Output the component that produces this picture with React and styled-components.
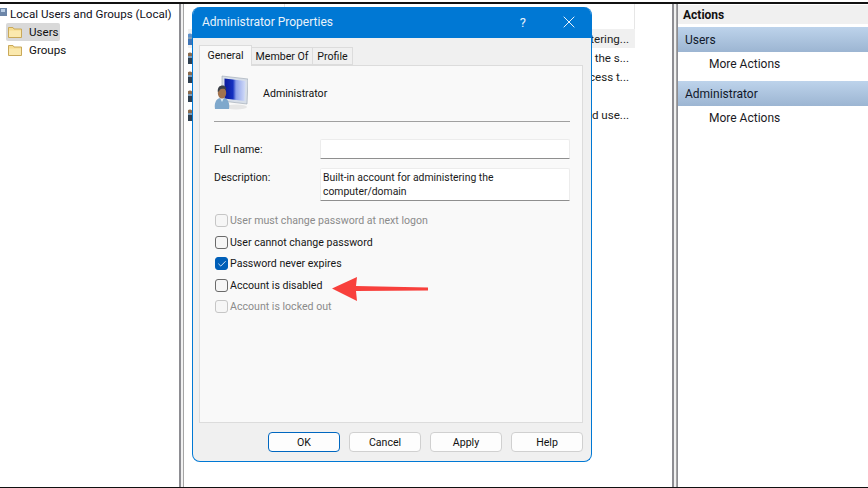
import React from 'react';
import styled, { createGlobalStyle } from 'styled-components';
import { Check } from 'lucide-react';

const GlobalStyle = createGlobalStyle`
  html, body { margin: 0; padding: 0; background: #fff; overflow: hidden; }
  * { box-sizing: border-box; }
  body { font-family: Roboto, "Open Sans", sans-serif; font-size: 12px; color: #111; }
`;

const Screen = styled.div`
  position: relative;
  width: 868px;
  height: 488px;
  padding-top: 2px;
  background: #fff;
  overflow: hidden;
`;

const Frame = styled.div`
  display: grid;
  grid-template-columns: 179px 1fr 191px;
  height: 485px;
  border-top: 2px solid #111;
`;

const BottomLine = styled.div`
  height: 1px;
  background: #111;
`;

const TreePane = styled.div`
  padding-top: 0;
  font-size: 11.6px;
`;

const TreeRoot = styled.div`
  display: flex;
  align-items: center;
  height: 19px;
  padding-left: 10px;
  white-space: nowrap;
  color: #10101a;
`;

const TreeRow = styled.div`
  display: flex;
  align-items: center;
  gap: 7px;
  width: 54px;
  height: 18px;
  margin-left: 6px;
  padding-left: 2px;
  border-radius: 2px;
  white-space: nowrap;
  background: ${({ $selected }) => ($selected ? '#d9d9d9' : 'transparent')};

  svg { flex: none; }
`;

const Splitter = styled.div`
  width: 5px;
  flex: none;
  background: #f1f1f1;
  border-left: 2px solid #8d8d92;
  border-right: 1px solid #a5a5a5;
`;

const MiddleWrap = styled.div`
  display: flex;
  min-width: 0;
`;

const ListPane = styled.div`
  flex: 1;
  padding-top: 25px;
  min-width: 0;
  font-size: 11.6px;
`;

const ListHeader = styled.div`
  position: relative;
  height: 0;
`;

const ListRow = styled.div`
  display: flex;
  align-items: center;
  justify-content: space-between;
  height: 19px;
  width: 447px;
  margin-left: 4px;
  padding-right: 6px;
  background: ${({ $selected }) => ($selected ? '#f0f0f0' : 'transparent')};
`;

const RowText = styled.span`
  white-space: nowrap;
  color: #222;
`;

const ColumnRule = styled.div`
  position: absolute;
  top: -25px;
  left: ${({ $left }) => $left}px;
  width: 1px;
  height: 25px;
  background: #e6e6e6;
`;

const ActionsPane = styled.div`
  border-left: 1px solid #8d8d92;
  padding-top: 1px;
  min-width: 0;
`;

const ActionsTitle = styled.div`
  display: flex;
  align-items: center;
  height: 19px;
  padding-left: 5px;
  background: #f0f0f0;
  font-weight: 700;
  color: #111;
`;

const ActionBand = styled.div`
  display: flex;
  align-items: center;
  height: 25px;
  margin-top: ${({ $first }) => ($first ? '3px' : '0')};
  padding-left: 7px;
  background: linear-gradient(#bdd3eb, #9cb5d2);
  color: #10182a;
`;

const ActionItem = styled.div`
  display: flex;
  align-items: center;
  height: 29px;
  padding: 0 0 6px 31px;
  color: #1a1a24;
`;

const Dialog = styled.div`
  position: absolute;
  left: 192px;
  top: 7px;
  width: 400px;
  height: 455px;
  display: flex;
  flex-direction: column;
  background: #f0f0f0;
  border: 1px solid #0078d4;
  border-top: 0;
  border-radius: 8px;
  overflow: hidden;
  font-size: 10.6px;
`;

const TitleBar = styled.div`
  display: flex;
  align-items: center;
  height: 31px;
  padding: 0 16px 1px 9px;
  flex: none;
  background: #0078d4;
  color: #e9f3fb;
  font-size: 12px;
`;

const TitleText = styled.span`
  flex: 1;
`;

const TitleHelp = styled.span`
  margin-right: 37px;
  font-size: 13px;
`;

const DialogBody = styled.div`
  flex: 1;
  display: flex;
  flex-direction: column;
  padding: 8px 8px 0 6px;
`;

const TabStrip = styled.div`
  display: flex;
  height: 19px;
  flex: none;
  align-items: flex-end;
  position: relative;
  z-index: 1;
`;

const Tab = styled.div`
  display: flex;
  align-items: center;
  justify-content: center;
  width: ${({ $w }) => $w}px;
  height: ${({ $active }) => ($active ? '21px' : '18px')};
  margin-bottom: ${({ $active }) => ($active ? '-1px' : '0')};
  padding: ${({ $active }) => ($active ? '0 0 1px' : '1px 0 0')};
  background: ${({ $active }) => ($active ? '#f9f9f9' : '#f0f0f0')};
  border: 1px solid #dcdcdc;
  border-left-width: ${({ $active }) => ($active ? '1px' : '0')};
  border-bottom: ${({ $active }) => ($active ? '0' : '1px solid #dcdcdc')};
  color: #151515;
`;

const TabPage = styled.div`
  height: 358px;
  flex: none;
  padding: 0 12px 0 14px;
  background: #f9f9f9;
  border: 1px solid #dcdcdc;
`;

const UserHead = styled.div`
  display: flex;
  align-items: center;
  gap: 15px;
  height: 56px;
  padding-bottom: 1px;
  border-bottom: 1px solid #a0a0a0;
`;

const FormRow = styled.div`
  display: grid;
  grid-template-columns: 106px 1fr;
  margin-top: ${({ $mt }) => $mt}px;
`;

const FieldLabel = styled.label`
  padding-top: ${({ $pt }) => $pt || 0}px;
  color: #1a1a1a;
`;

const Field = styled.div`
  height: ${({ $h }) => $h}px;
  padding: 2px 2px;
  background: #fff;
  border: 1px solid #ececec;
  border-bottom: 1px solid #8f8f8f;
  border-radius: 2px 2px 0 0;
  font-size: 10.4px;
  line-height: 13.5px;
  color: #1a1a1a;
`;

const CheckGroup = styled.div`
  display: flex;
  flex-direction: column;
  gap: 8.5px;
  margin-top: 13px;
`;

const CheckRow = styled.div`
  display: flex;
  align-items: center;
  gap: 2px;
  height: 13px;
  color: ${({ $off }) => ($off ? '#8b8b8b' : '#161616')};
`;

const Box = styled.span`
  display: flex;
  align-items: center;
  justify-content: center;
  width: 13px;
  height: 13px;
  margin-left: 1px;
  flex: none;
  border-radius: 3px;
  color: #fff;
  background: ${({ $checked }) => ($checked ? '#005fb8' : '#f6f6f6')};
  border: 1px solid ${({ $checked, $off }) => ($checked ? '#005fb8' : $off ? '#c6c6c6' : '#6a6a6a')};
`;

const ButtonRow = styled.div`
  display: flex;
  justify-content: flex-end;
  gap: 9px;
  margin-top: 9px;
`;

const Button = styled.div`
  display: flex;
  align-items: center;
  justify-content: center;
  width: 72px;
  height: 20px;
  padding-top: 1px;
  background: #fdfdfd;
  border: 1px solid ${({ $primary }) => ($primary ? '#0067c0' : '#d0d0d0')};
  border-radius: 4px;
  color: #111;
`;

const Arrow = styled.svg`
  position: absolute;
  left: 330px;
  top: 275px;
`;

const RootIcon = styled.svg`
  position: absolute;
  left: 0;
  top: 8px;
`;

const Folder = () => (
  <svg width="14" height="12" viewBox="0 0 14 12">
    <path d="M.5 1.500h4.500l1 1.500h7.500v8.500H.5z" fill="#f6dc90" stroke="#c9a95a" />
    <path d="M1 4.500h12v6.500H1z" fill="#fbe9ae" />
  </svg>
);

const TinyUser = ({ selected }) => (
  <svg width="16" height="14" viewBox="0 0 16 14">
    <circle cx="2" cy="4" r="2.500" fill={selected ? '#5b8fc9' : '#8a6a4c'} />
    <rect x="0" y="7" width="4" height="6" fill={selected ? '#3f74b5' : '#2f3f4f'} />
    <rect x="0" y="5" width="4" height="2" fill="#7f9db8" />
  </svg>
);

const AdminIcon = () => (
  <svg width="34" height="36" viewBox="0 0 34 36">
    <defs>
      <linearGradient id="screenGlow" x1="0" y1="0" x2="1" y2="0">
        <stop offset="0" stopColor="#0a1a9c" />
        <stop offset=".4" stopColor="#1430c0" />
        <stop offset=".55" stopColor="#8ea2ea" />
        <stop offset="1" stopColor="#d3dcf8" />
      </linearGradient>
    </defs>
    <path d="M8 1l26 3-1 25-25-3z" fill="#d7dee8" stroke="#9aa4b0" strokeWidth=".6" />
    <path d="M10.500 3.500l21 2.500-1 20-20-2.500z" fill="url(#screenGlow)" />
    <ellipse cx="22" cy="32" rx="11" ry="2.500" fill="#e6e6e6" />
    <path d="M1 34c-1-6 1-10 5-11h4c4 1 6 5 5 11z" fill="#7fa8cc" />
    <path d="M6 23l2 4 2-4z" fill="#dcebf6" />
    <ellipse cx="8" cy="18" rx="4.200" ry="5.500" fill="#a1734f" />
    <path d="M3.800 17c-.4-4.500 1.700-6.500 4.700-6.500s4 2.500 3.700 4.500c-1.700-1.700-5-1.700-6.200-.4-.4.9-.9 1.900-2.200 2.400z" fill="#3a3f47" />
  </svg>
);

const rows = [
  'Built-in account for administering...',
  'A user account managed by the s...',
  'Built-in account for guest access t...',
  '',
  'A user account managed and use...',
];

const checks = [
  { label: 'User must change password at next logon', off: true },
  { label: 'User cannot change password' },
  { label: 'Password never expires', checked: true },
  { label: 'Account is disabled' },
  { label: 'Account is locked out', off: true },
];

const App = () => (
  <Screen>
    <GlobalStyle />
    <Frame>
      <TreePane>
        <RootIcon width="8" height="9" viewBox="0 0 8 9">
          <rect x="0" y="0" width="7" height="8" fill="#6c86a8" />
          <rect x="1" y="1" width="4" height="3" fill="#b9cde4" />
        </RootIcon>
        <TreeRoot>Local Users and Groups (Local)</TreeRoot>
        <TreeRow $selected><Folder />Users</TreeRow>
        <TreeRow><Folder />Groups</TreeRow>
      </TreePane>
      <MiddleWrap>
        <Splitter />
        <ListPane>
          <ListHeader>
            <ColumnRule $left={100} />
            <ColumnRule $left={450} />
          </ListHeader>
          {rows.map((text, i) => (
            <ListRow key={i} $selected={i === 0}>
              <TinyUser selected={i === 0} />
              <RowText>{text}</RowText>
            </ListRow>
          ))}
        </ListPane>
        <Splitter />
      </MiddleWrap>
      <ActionsPane>
        <ActionsTitle>Actions</ActionsTitle>
        <ActionBand $first>Users</ActionBand>
        <ActionItem>More Actions</ActionItem>
        <ActionBand>Administrator</ActionBand>
        <ActionItem>More Actions</ActionItem>
      </ActionsPane>
    </Frame>
    <BottomLine />

    <Dialog>
      <TitleBar>
        <TitleText>Administrator Properties</TitleText>
        <TitleHelp>?</TitleHelp>
        <svg width="12" height="12" viewBox="0 0 12 12">
          <path d="M.7.700l10.600 10.600M11.300.700L.7 11.300" stroke="#e9f3fb" strokeWidth="1" />
        </svg>
      </TitleBar>
      <DialogBody>
        <TabStrip>
          <Tab $active $w={53}>General</Tab>
          <Tab $w={61}>Member Of</Tab>
          <Tab $w={40}>Profile</Tab>
        </TabStrip>
        <TabPage>
          <UserHead>
            <AdminIcon />
            <span>Administrator</span>
          </UserHead>
          <FormRow $mt={17}>
            <FieldLabel $pt={4}>Full name:</FieldLabel>
            <Field $h={20} />
          </FormRow>
          <FormRow $mt={9}>
            <FieldLabel $pt={3}>Description:</FieldLabel>
            <Field $h={33}>Built-in account for administering the<br />computer/domain</Field>
          </FormRow>
          <CheckGroup>
            {checks.map(({ label, checked, off }) => (
              <CheckRow key={label} $off={off}>
                <Box $checked={checked} $off={off}>
                  {checked && <Check size={10} strokeWidth={2} />}
                </Box>
                {label}
              </CheckRow>
            ))}
          </CheckGroup>
        </TabPage>
        <ButtonRow>
          <Button $primary>OK</Button>
          <Button>Cancel</Button>
          <Button>Apply</Button>
          <Button>Help</Button>
        </ButtonRow>
      </DialogBody>
    </Dialog>

    <Arrow width="100" height="28" viewBox="0 0 100 28">
      <path d="M2 13.500L27 2l-1 9 72 1.500v3L26 16l1 10z" fill="#f8403c" />
    </Arrow>
  </Screen>
);

export default App;
